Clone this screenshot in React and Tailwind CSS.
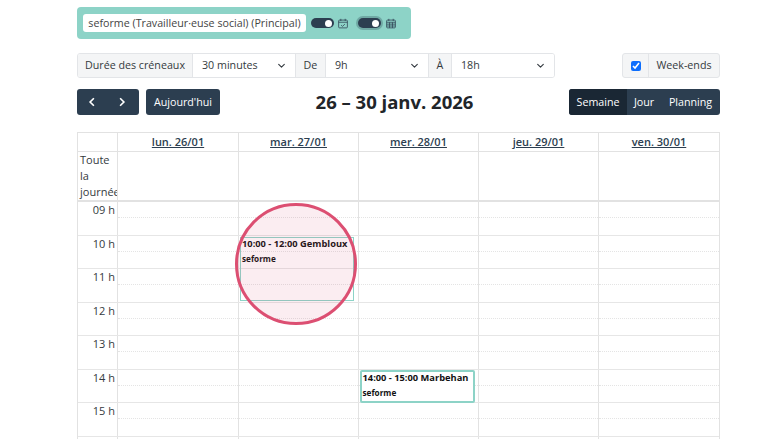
import React from "react";

const days = ["lun. 26/01", "mar. 27/01", "mer. 28/01", "jeu. 29/01", "ven. 30/01"];
const hours = ["09 h", "10 h", "11 h", "12 h", "13 h", "14 h", "15 h", ""];

function Toggle({ ring }) {
  return (
    <span className={`flex h-[10px] w-[23px] items-center justify-end rounded-full bg-[#2c3e50] pr-[2px] ${ring ? "shadow-[0_0_0_2px_#6fa9a4]" : ""}`}>
      <span className="h-[7px] w-[7px] rounded-full bg-white" />
    </span>
  );
}

function CalCheck() {
  return (
    <svg width="10" height="11" viewBox="0 0 16 16" fill="none" stroke="#2c3e50" strokeWidth="1.2">
      <rect x="1" y="2.5" width="14" height="12.5" rx="1.5" />
      <path d="M1 6h14M4.5 0.5v3.5M11.5 0.5v3.5M5 10.5l2.2 2.2 3.8-3.8" />
    </svg>
  );
}

function CalGrid() {
  return (
    <svg width="10" height="11" viewBox="0 0 16 16" fill="none" stroke="#2c3e50" strokeWidth="1.2">
      <rect x="1" y="2.5" width="14" height="12.5" rx="1.5" />
      <path d="M1 6h14M4.5 0.5v3.5M11.5 0.5v3.5M1 9h14M1 12h14M5.7 6v9M10.3 6v9" />
    </svg>
  );
}

function Chevron() {
  return (
    <svg width="9" height="9" viewBox="0 0 16 16" fill="none" stroke="#343a40" strokeWidth="2" strokeLinecap="round" strokeLinejoin="round">
      <path d="M3 6l5 5 5-5" />
    </svg>
  );
}

function SelectBox({ label, className }) {
  return (
    <div className={`flex items-center justify-between bg-white pl-[9px] pr-[9px] ${className}`}>
      <span>{label}</span>
      <Chevron />
    </div>
  );
}

function EventCard({ time, className }) {
  return (
    <div className={`absolute z-10 border-[#8dd3c7] font-bold text-[#111] ${className}`}>
      <div className="whitespace-nowrap text-[9.3px] leading-[12px]">{time}</div>
      <div className="mt-[3px] text-[8.2px] leading-[12px]">seforme</div>
    </div>
  );
}

export default function App() {
  return (
    <div className="h-[439px] w-[780px] overflow-hidden bg-white pl-[77px] pr-[60px] pt-[7px] font-['Open_Sans','Noto_Sans',sans-serif] text-[10.7px] text-[#343a40]">
      {/* calendriers */}
      <div className="flex h-8 w-[334px] items-center rounded bg-[#8dd3c7] pl-[6px]">
        <span className="flex h-[18px] w-[223px] items-center justify-center whitespace-nowrap rounded-[3px] bg-white text-[#444]">
          seforme (Travailleur·euse social) (Principal)
        </span>
        <span className="ml-[5px]"><Toggle /></span>
        <span className="ml-[4px] flex"><CalCheck /></span>
        <span className="ml-[10px]"><Toggle ring /></span>
        <span className="ml-[5px] flex"><CalGrid /></span>
      </div>

      {/* filtres */}
      <div className="mt-[14px] flex h-[25px] justify-between">
        <div className="flex w-[478px] overflow-hidden rounded-[3px] border border-[#e3e5e8]">
          <div className="flex w-[115px] items-center justify-center border-r border-[#e3e5e8] bg-[#f4f5f6]">Durée des créneaux</div>
          <SelectBox label="30 minutes" className="w-[102px]" />
          <div className="flex w-[31px] items-center justify-center border-x border-[#e3e5e8] bg-[#f4f5f6]">De</div>
          <SelectBox label="9h" className="w-[102px]" />
          <div className="flex w-[24px] items-center justify-center border-x border-[#e3e5e8] bg-[#f4f5f6]">À</div>
          <SelectBox label="18h" className="flex-1" />
        </div>
        <div className="flex w-[98px] overflow-hidden rounded-[3px] border border-[#e3e5e8] bg-[#f4f5f6]">
          <div className="flex w-[26px] items-center justify-center border-r border-[#e3e5e8]">
            <input type="checkbox" defaultChecked readOnly className="h-[10px] w-[10px] accent-[#0d6efd]" />
          </div>
          <div className="flex flex-1 items-center justify-center">Week-ends</div>
        </div>
      </div>

      {/* navigation */}
      <div className="mt-[11px] flex h-[26px] items-center">
        <div className="flex h-[26px] w-[62px] items-center gap-[18px] rounded-[3px] bg-[#2c3e50] pl-[9px]">
          <svg width="12" height="12" viewBox="0 0 16 16" fill="none" stroke="white" strokeWidth="2.2"><path d="M10.5 3l-5 5 5 5" /></svg>
          <svg width="12" height="12" viewBox="0 0 16 16" fill="none" stroke="white" strokeWidth="2.2"><path d="M5.5 3l5 5-5 5" /></svg>
        </div>
        <div className="ml-[7px] flex h-[26px] w-[74px] items-center justify-center rounded-[3px] bg-[#2c3e50] text-white">Aujourd'hui</div>
        <div className="w-[349px] text-center text-[18.5px] font-bold leading-none text-[#212529]">26 – 30 janv. 2026</div>
        <div className="flex h-[26px] w-[151px] overflow-hidden rounded-[3px] bg-[#2c3e50] text-white">
          <div className="flex w-[58px] items-center justify-center bg-[#1a2734]">Semaine</div>
          <div className="flex w-[34px] items-center justify-center">Jour</div>
          <div className="flex flex-1 items-center justify-center">Planning</div>
        </div>
      </div>

      {/* calendrier */}
      <div className="relative mt-[17px] w-[643px] border-l border-r border-t border-[#e2e2e2]">
        <div className="grid h-[19px] grid-cols-[39px_121px_120px_120px_120px_1fr] border-b border-[#e2e2e2]">
          <div />
          {days.map((d) => (
            <div key={d} className="flex items-center justify-center border-l border-[#e2e2e2] text-[11px] font-semibold text-[#2c3e50] underline">{d}</div>
          ))}
        </div>
        <div className="grid h-[50px] grid-cols-[39px_121px_120px_120px_120px_1fr] border-b-2 border-[#e2e2e2]">
          <div className="overflow-hidden pl-[2px] text-[11px] leading-[16px]">Toute<br />la<br />journée</div>
          {days.map((d) => (
            <div key={d} className="border-l border-[#e2e2e2]" />
          ))}
        </div>
        <div>
          {hours.map((h, i) => (
            <div key={i} className="grid h-[33.5px] grid-cols-[39px_121px_120px_120px_120px_1fr] border-b border-[#e6e6e6]">
              <div className="pr-[2px] text-right text-[11px] leading-[16px]">{h}</div>
              {days.map((d) => (
                <div key={d} className="border-l border-[#e2e2e2]">
                  <div className="h-[16px] border-b border-dotted border-[#e4e4e4]" />
                </div>
              ))}
            </div>
          ))}
        </div>
        <EventCard time="10:00 - 12:00 Gembloux" className="left-[162px] top-[104px] h-[64px] w-[114px] border pl-[1px]" />
        <EventCard time="14:00 - 15:00 Marbehan" className="left-[282px] top-[237px] h-[33px] w-[115px] rounded-[2px] border-2 bg-white pl-[0.5px]" />
        {/* cercle d'annotation */}
        <div className="absolute left-[157px] top-[70px] z-20 h-[122px] w-[122px] rounded-full border-[3px] border-[#dc4f72] bg-[#dc4f72]/10" />
      </div>
    </div>
  );
}
